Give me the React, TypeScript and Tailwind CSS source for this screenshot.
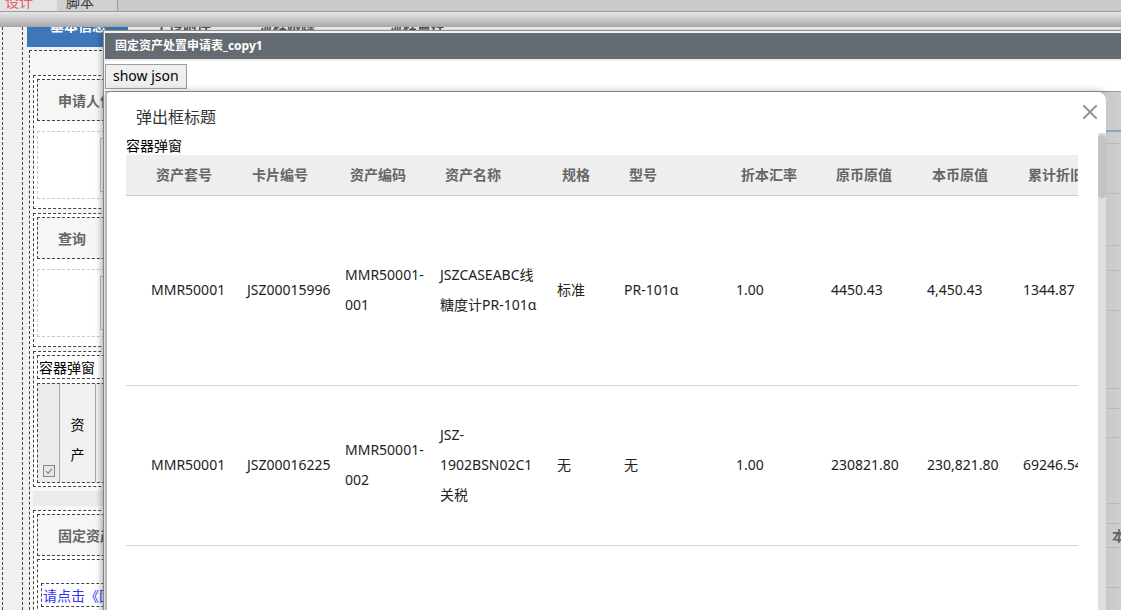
import { X } from "lucide-react";

type Row = { h: string; cells: string[][] };

const headers = ["资产套号", "卡片编号", "资产编码", "资产名称", "规格", "型号", "折本汇率", "原币原值", "本币原值", "累计折旧", "资产净值", "备注"];

const rows: Row[] = [
  {
    h: "h-[190px]",
    cells: [["MMR50001"], ["JSZ00015996"], ["MMR50001-", "001"], ["JSZCASEABC线", "糖度计PR-101α"], ["标准"], ["PR-101α"], ["1.00"], ["4450.43"], ["4,450.43"], ["1344.87"], ["3105.56"], [""]],
  },
  {
    h: "h-[160px]",
    cells: [["MMR50001"], ["JSZ00016225"], ["MMR50001-", "002"], ["JSZ-", "1902BSN02C1", "关税"], ["无"], ["无"], ["1.00"], ["230821.80"], ["230,821.80"], ["69246.54"], ["161575.26"], [""]],
  },
  { h: "h-[120px]", cells: [] },
];

function LabelBox({ text }: { text: string }) {
  return (
    <div className="h-[42px] shrink-0 border border-dashed border-[#444] bg-[#f6f6f6] flex items-center pl-[20px] text-[14px] font-bold text-[#666] whitespace-nowrap">
      {text}
    </div>
  );
}

function FieldBox() {
  return (
    <div className="mt-[10px] h-[68px] shrink-0 border border-dashed border-[#c8c8c8] bg-white pt-[6px] pl-[62px]">
      <div className="h-[54px] border border-[#c4c4c4] bg-white" />
    </div>
  );
}

function BackgroundPage() {
  return (
    <div className="flex-1 min-h-0 overflow-hidden flex bg-[#f0f0f0]">
      <div className="w-[22px] shrink-0 pl-[2px]">
        <div className="h-full border-l border-dashed border-[#444]" />
      </div>
      <div className="flex-1 min-h-0 border-l border-dashed border-[#444] flex flex-col">
        {/* tab strip, scrolled partly out of view */}
        <div className="-mt-[8px] h-[28px] shrink-0 flex items-start text-[14px] font-bold leading-[14px] whitespace-nowrap">
          <div className="ml-[4px] w-[101px] h-full bg-[#3d76b9] text-white pl-[23px]">基本信息</div>
          <div className="ml-[27px] text-[#555]">上传附件</div>
          <div className="ml-[48px] text-[#555]">流程跟踪</div>
          <div className="ml-[74px] text-[#555]">流程监控</div>
        </div>
        <div className="ml-[6px] mt-[3px] flex-1 min-h-0 border-l border-t border-dashed border-[#444] bg-[#f7f7f7] pl-[3px] pt-[24px]">
          <div className="w-[420px] flex flex-col gap-[4px]">
            <div className="shrink-0 border border-dashed border-[#444] bg-white p-[3px] pb-[9px]">
              <LabelBox text="申请人信息" />
              <FieldBox />
            </div>
            <div className="shrink-0 border border-dashed border-[#444] bg-white p-[3px] pb-[9px]">
              <LabelBox text="查询" />
              <FieldBox />
            </div>
            <div className="shrink-0 border border-dashed border-[#444] bg-white p-[3px]">
              <div className="h-[24px] border border-dashed border-[#444] flex items-center pl-[1px] text-[14px] text-black">容器弹窗</div>
              <div className="mt-[4px] h-[100px] border border-dashed border-[#444] bg-[#f0f0f0] flex">
                <div className="w-[22px] border-r border-[#a8a8a8] bg-[#ececec] flex items-end justify-center pb-[5px]">
                  <div className="w-[12px] h-[12px] border border-[#888] bg-[#e6e6e6] flex items-center justify-center">
                    <svg width="8" height="8" viewBox="0 0 8 8">
                      <path d="M1 4.2 L3.2 6.2 L7 1.8" fill="none" stroke="#888" strokeWidth="1.2" />
                    </svg>
                  </div>
                </div>
                <div className="w-[36px] border-r border-[#a8a8a8] flex flex-col items-center justify-center pt-[14px] text-[14px] leading-[30px] text-black">
                  <span>资</span>
                  <span>产</span>
                </div>
                <div className="flex-1" />
              </div>
            </div>
            <div className="h-[15px] shrink-0 bg-[#ebebeb]" />
            <div className="shrink-0 border border-dashed border-[#444] bg-white p-[3px] h-[120px]">
              <LabelBox text="固定资产信息" />
              <div className="mt-[3px] h-[60px] border border-dashed border-[#444] pt-[23px] pl-[3px]">
                <div className="h-[24px] w-[300px] border border-dashed border-[#444] flex items-center pl-[1px] text-[14px] text-[#3131f5] whitespace-nowrap">
                  请点击《固定资产处置说明》查看
                </div>
              </div>
            </div>
          </div>
        </div>
      </div>
    </div>
  );
}

function MaskLines() {
  return (
    <div className="flex-1 flex flex-col bg-linear-to-r from-[#c9c9c9] to-[#d8d8d8]">
      <div className="h-[38px]" />
      <div className="h-[2px] bg-[#8fa4c3]" />
      <div className="h-[12px] border-b border-[#bababa]" />
      <div className="h-[50px] border-b border-[#bababa]" />
      <div className="h-[52px] border-b border-[#bababa]" />
      <div className="h-[25px] border-b border-[#bababa]" />
      <div className="h-[40px] border-b border-[#bababa]" />
      <div className="h-[78px] border-b border-[#bababa]" />
      <div className="h-[20px] border-b border-[#bababa]" />
      <div className="h-[29px] border-b border-[#bababa]" />
      <div className="h-[66px] border-b border-[#bababa]" />
      <div className="h-[20px] border-b border-[#bababa]" />
      <div className="h-[24px] border-b border-[#bababa] pl-[6px] flex items-center text-[14px] font-bold text-[#666] whitespace-nowrap">本币</div>
      <div className="h-[40px] border-b border-[#bababa]" />
    </div>
  );
}

function Dialog() {
  return (
    <div className="w-[999px] shrink-0 h-full bg-white rounded-tl-[4px] rounded-tr-[8px] shadow-[0_0_8px_rgba(0,0,0,0.3)] flex flex-col">
      <div className="h-[41px] shrink-0 flex items-start justify-between pl-[29px] pr-[4px]">
        <div className="mt-[14px] text-[16px] leading-[22px] text-[#333]">弹出框标题</div>
        <div className="mt-[8px] text-[#999]">
          <X size={24} strokeWidth={2.3} />
        </div>
      </div>
      <div className="flex-1 flex min-h-0">
        <div className="flex-1 pl-[19px] pt-[4px] overflow-hidden">
          <div className="text-[14px] leading-[18px] text-black">容器弹窗</div>
          <div className="w-[952px] overflow-hidden">
            <table className="table-fixed border-collapse w-[1220px]">
              <colgroup>
                <col className="w-[121px]" />
                <col className="w-[98px]" />
                <col className="w-[95px]" />
                <col className="w-[117px]" />
                <col className="w-[67px]" />
                <col className="w-[112px]" />
                <col className="w-[95px]" />
                <col className="w-[96px]" />
                <col className="w-[96px]" />
                <col className="w-[110px]" />
                <col className="w-[110px]" />
                <col className="w-[103px]" />
              </colgroup>
              <thead>
                <tr>
                  {headers.map((h, i) => (
                    <th
                      key={h}
                      className={`h-[40px] bg-[#eeeeee] border-b border-[#cccccc] text-left align-middle text-[14px] font-bold text-[#666] whitespace-nowrap ${i === 0 ? "pl-[30px]" : "pl-[5px]"}`}
                    >
                      {h}
                    </th>
                  ))}
                </tr>
              </thead>
              <tbody>
                {rows.map((r, ri) => (
                  <tr key={ri} className="border-b border-[#d4d4d4]">
                    {headers.map((_, ci) => (
                      <td
                        key={ci}
                        className={`${r.h} align-middle text-left text-[14px] leading-[30px] text-[#222] whitespace-nowrap ${ci === 0 ? "pl-[25px]" : "pl-0"}`}
                      >
                        {(r.cells[ci] || []).map((line, li) => (
                          <div key={li}>{line}</div>
                        ))}
                      </td>
                    ))}
                  </tr>
                ))}
              </tbody>
            </table>
          </div>
        </div>
        <div className="w-[8px] shrink-0 bg-[#dedede] pt-[2px]">
          <div className="h-[63px] rounded-[4px] bg-[#c3c3c3]" />
        </div>
      </div>
    </div>
  );
}

export default function App() {
  return (
    <div className="relative w-[1121px] h-[610px] overflow-hidden flex flex-col bg-[#f0f0f0] font-['Noto_Sans','Noto_Sans_CJK_SC',sans-serif]">
      {/* designer tabs */}
      <div className="h-[12px] shrink-0 bg-[#cacaca] border-b border-[#9c9c9c] overflow-hidden flex items-start">
        <div className="-mt-[13px] h-[24px] w-[57px] bg-[#e4e4e4] rounded-tr-[14px] pt-[8px] pl-[5px] text-[14px] leading-[14px] text-[#e0606e]">设计</div>
        <div className="-mt-[13px] h-[24px] w-[61px] bg-[#d0d0d0] border-r border-[#9a9a9a] rounded-tr-[16px] pt-[8px] pl-[9px] text-[14px] leading-[14px] text-[#333]">脚本</div>
      </div>
      <div className="h-[15px] shrink-0 bg-linear-to-b from-[#e6e6e6] to-[#a8a8a8]" />
      <BackgroundPage />

      {/* popup window */}
      <div className="absolute left-[103px] top-[30px] w-[1040px] h-[600px] bg-[#f2f2f2] border-l border-t border-[#8c8c8c] pl-[1px] pt-[2px] flex flex-col shadow-[-3px_0_5px_rgba(0,0,0,0.2)]">
        <div className="h-[26px] shrink-0 bg-[#646b72] flex items-center pl-[10px] text-[12px] font-bold text-white whitespace-nowrap">
          固定资产处置申请表_copy1
        </div>
        <div className="h-[2px] shrink-0 bg-[#eeeeee]" />
        <div className="h-[30px] shrink-0 bg-white pt-[2px]">
          <button className="h-[25px] px-[7px] border border-[#9e9e9e] bg-[#efefef] text-[14px] leading-[20px] text-black">
            show json
          </button>
        </div>
        <div className="flex-1 min-h-0 border-t border-[#9a9a9a] bg-[#d2d2d2] flex pl-[2px]">
          <Dialog />
          <MaskLines />
        </div>
      </div>
    </div>
  );
}
